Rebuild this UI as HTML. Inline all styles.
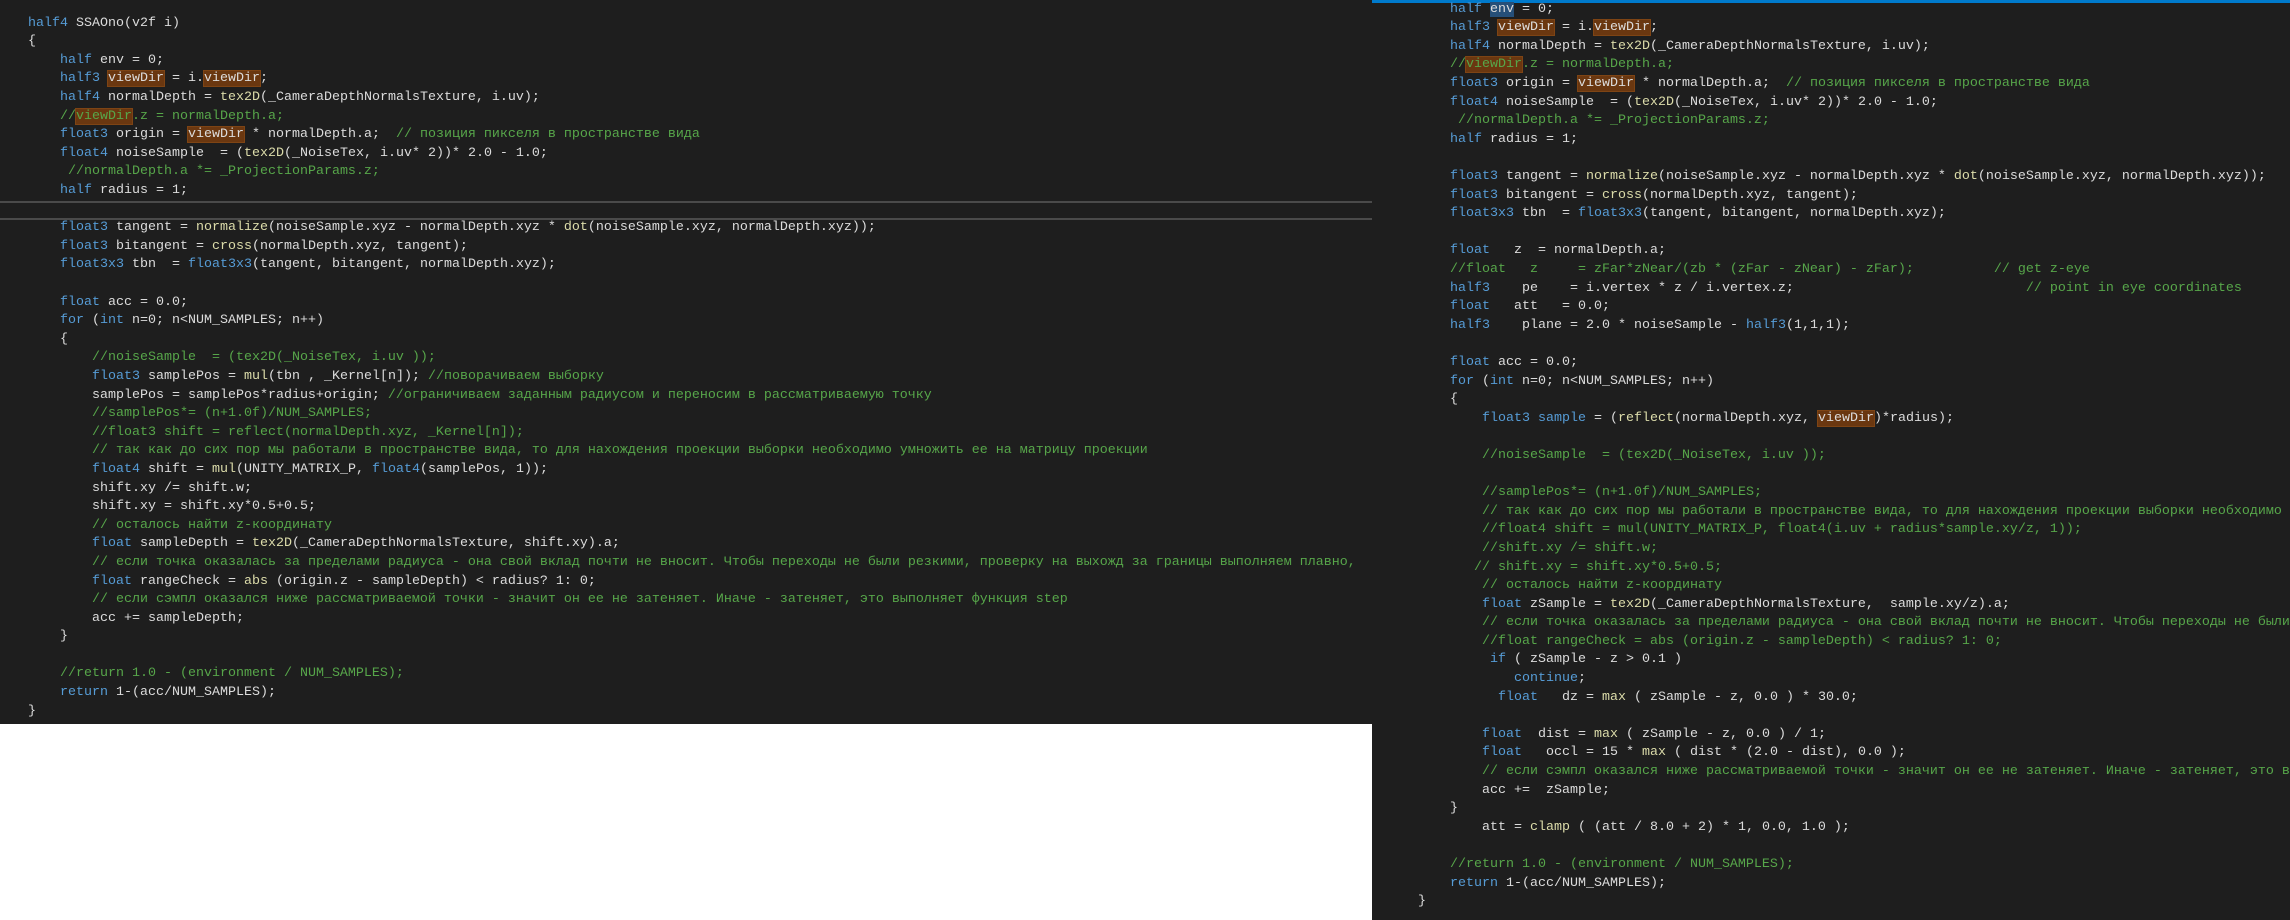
<!DOCTYPE html>
<html><head><meta charset="utf-8">
<style>
html,body{margin:0;padding:0;width:2290px;height:920px;background:#fff;overflow:hidden}
.p{position:absolute;background:#1e1e1e;overflow:hidden}
pre{margin:0;position:absolute;font-family:"Liberation Mono",monospace;font-size:13.33px;line-height:18.6px;color:#dcdcdc;white-space:pre}
.k{color:#569cd6}.f{color:#dcdcaa}.c{color:#57a64a}
.h{background:#6a3710;outline:1px solid #7e4414}
.s{background:#264f78}
</style></head><body>
<div class="p" style="left:0;top:0;width:1372px;height:724px">
<div style="position:absolute;left:0;top:201px;width:1372px;height:2px;background:#4a4a4a"></div>
<div style="position:absolute;left:0;top:218px;width:1372px;height:2px;background:#4a4a4a"></div>
<pre style="left:28px;top:14.7px"><span class="k">half4</span> SSAOno(v2f i)
{
    <span class="k">half</span> env = 0;
    <span class="k">half3</span> <span class="h">viewDir</span> = i.<span class="h">viewDir</span>;
    <span class="k">half4</span> normalDepth = <span class="f">tex2D</span>(_CameraDepthNormalsTexture, i.uv);
    <span class="c">//<span class="h">viewDir</span>.z = normalDepth.a;</span>
    <span class="k">float3</span> origin = <span class="h">viewDir</span> * normalDepth.a;  <span class="c">// позиция пикселя в пространстве вида</span>
    <span class="k">float4</span> noiseSample  = (<span class="f">tex2D</span>(_NoiseTex, i.uv* 2))* 2.0 - 1.0;
     <span class="c">//normalDepth.a *= _ProjectionParams.z;</span>
    <span class="k">half</span> radius = 1;

    <span class="k">float3</span> tangent = <span class="f">normalize</span>(noiseSample.xyz - normalDepth.xyz * <span class="f">dot</span>(noiseSample.xyz, normalDepth.xyz));
    <span class="k">float3</span> bitangent = <span class="f">cross</span>(normalDepth.xyz, tangent);
    <span class="k">float3x3</span> tbn  = <span class="k">float3x3</span>(tangent, bitangent, normalDepth.xyz);

    <span class="k">float</span> acc = 0.0;
    <span class="k">for</span> (<span class="k">int</span> n=0; n&lt;NUM_SAMPLES; n++)
    {
        <span class="c">//noiseSample  = (tex2D(_NoiseTex, i.uv ));</span>
        <span class="k">float3</span> samplePos = <span class="f">mul</span>(tbn , _Kernel[n]); <span class="c">//поворачиваем выборку</span>
        samplePos = samplePos*radius+origin; <span class="c">//ограничиваем заданным радиусом и переносим в рассматриваемую точку</span>
        <span class="c">//samplePos*= (n+1.0f)/NUM_SAMPLES;</span>
        <span class="c">//float3 shift = reflect(normalDepth.xyz, _Kernel[n]);</span>
        <span class="c">// так как до сих пор мы работали в пространстве вида, то для нахождения проекции выборки необходимо умножить ее на матрицу проекции</span>
        <span class="k">float4</span> shift = <span class="f">mul</span>(UNITY_MATRIX_P, <span class="k">float4</span>(samplePos, 1));
        shift.xy /= shift.w;
        shift.xy = shift.xy*0.5+0.5;
        <span class="c">// осталось найти z-координату</span>
        <span class="k">float</span> sampleDepth = <span class="f">tex2D</span>(_CameraDepthNormalsTexture, shift.xy).a;
        <span class="c">// если точка оказалась за пределами радиуса - она свой вклад почти не вносит. Чтобы переходы не были резкими, проверку на выхожд за границы выполняем плавно,</span>
        <span class="k">float</span> rangeCheck = <span class="f">abs</span> (origin.z - sampleDepth) &lt; radius? 1: 0;
        <span class="c">// если сэмпл оказался ниже рассматриваемой точки - значит он ее не затеняет. Иначе - затеняет, это выполняет функция step</span>
        acc += sampleDepth;
    }

    <span class="c">//return 1.0 - (environment / NUM_SAMPLES);</span>
    <span class="k">return</span> 1-(acc/NUM_SAMPLES);
}</pre>
</div>
<div class="p" style="left:1372px;top:0;width:918px;height:920px">
<div style="position:absolute;left:0;top:0;width:918px;height:3px;background:#007acc"></div>
<pre style="left:46px;top:0.7px">    <span class="k">half</span> <span class="s">env</span> = 0;
    <span class="k">half3</span> <span class="h">viewDir</span> = i.<span class="h">viewDir</span>;
    <span class="k">half4</span> normalDepth = <span class="f">tex2D</span>(_CameraDepthNormalsTexture, i.uv);
    <span class="c">//<span class="h">viewDir</span>.z = normalDepth.a;</span>
    <span class="k">float3</span> origin = <span class="h">viewDir</span> * normalDepth.a;  <span class="c">// позиция пикселя в пространстве вида</span>
    <span class="k">float4</span> noiseSample  = (<span class="f">tex2D</span>(_NoiseTex, i.uv* 2))* 2.0 - 1.0;
     <span class="c">//normalDepth.a *= _ProjectionParams.z;</span>
    <span class="k">half</span> radius = 1;

    <span class="k">float3</span> tangent = <span class="f">normalize</span>(noiseSample.xyz - normalDepth.xyz * <span class="f">dot</span>(noiseSample.xyz, normalDepth.xyz));
    <span class="k">float3</span> bitangent = <span class="f">cross</span>(normalDepth.xyz, tangent);
    <span class="k">float3x3</span> tbn  = <span class="k">float3x3</span>(tangent, bitangent, normalDepth.xyz);

    <span class="k">float</span>   z  = normalDepth.a;
    <span class="c">//float   z     = zFar*zNear/(zb * (zFar - zNear) - zFar);          // get z-eye</span>
    <span class="k">half3</span>    pe    = i.vertex * z / i.vertex.z;                             <span class="c">// point in eye coordinates</span>
    <span class="k">float</span>   att   = 0.0;
    <span class="k">half3</span>    plane = 2.0 * noiseSample - <span class="k">half3</span>(1,1,1);

    <span class="k">float</span> acc = 0.0;
    <span class="k">for</span> (<span class="k">int</span> n=0; n&lt;NUM_SAMPLES; n++)
    {
        <span class="k">float3</span> <span class="k">sample</span> = (<span class="f">reflect</span>(normalDepth.xyz, <span class="h">viewDir</span>)*radius);

        <span class="c">//noiseSample  = (tex2D(_NoiseTex, i.uv ));</span>

        <span class="c">//samplePos*= (n+1.0f)/NUM_SAMPLES;</span>
        <span class="c">// так как до сих пор мы работали в пространстве вида, то для нахождения проекции выборки необходимо умножить ее на матрицу проекции</span>
        <span class="c">//float4 shift = mul(UNITY_MATRIX_P, float4(i.uv + radius*sample.xy/z, 1));</span>
        <span class="c">//shift.xy /= shift.w;</span>
       <span class="c">// shift.xy = shift.xy*0.5+0.5;</span>
        <span class="c">// осталось найти z-координату</span>
        <span class="k">float</span> zSample = <span class="f">tex2D</span>(_CameraDepthNormalsTexture,  sample.xy/z).a;
        <span class="c">// если точка оказалась за пределами радиуса - она свой вклад почти не вносит. Чтобы переходы не были резкими</span>
        <span class="c">//float rangeCheck = abs (origin.z - sampleDepth) &lt; radius? 1: 0;</span>
         <span class="k">if</span> ( zSample - z &gt; 0.1 )
            <span class="k">continue</span>;
          <span class="k">float</span>   dz = <span class="f">max</span> ( zSample - z, 0.0 ) * 30.0;

        <span class="k">float</span>  dist = <span class="f">max</span> ( zSample - z, 0.0 ) / 1;
        <span class="k">float</span>   occl = 15 * <span class="f">max</span> ( dist * (2.0 - dist), 0.0 );
        <span class="c">// если сэмпл оказался ниже рассматриваемой точки - значит он ее не затеняет. Иначе - затеняет, это выполняет функция step</span>
        acc +=  zSample;
    }
        att = <span class="f">clamp</span> ( (att / 8.0 + 2) * 1, 0.0, 1.0 );

    <span class="c">//return 1.0 - (environment / NUM_SAMPLES);</span>
    <span class="k">return</span> 1-(acc/NUM_SAMPLES);
}</pre>
</div>
</body></html>
